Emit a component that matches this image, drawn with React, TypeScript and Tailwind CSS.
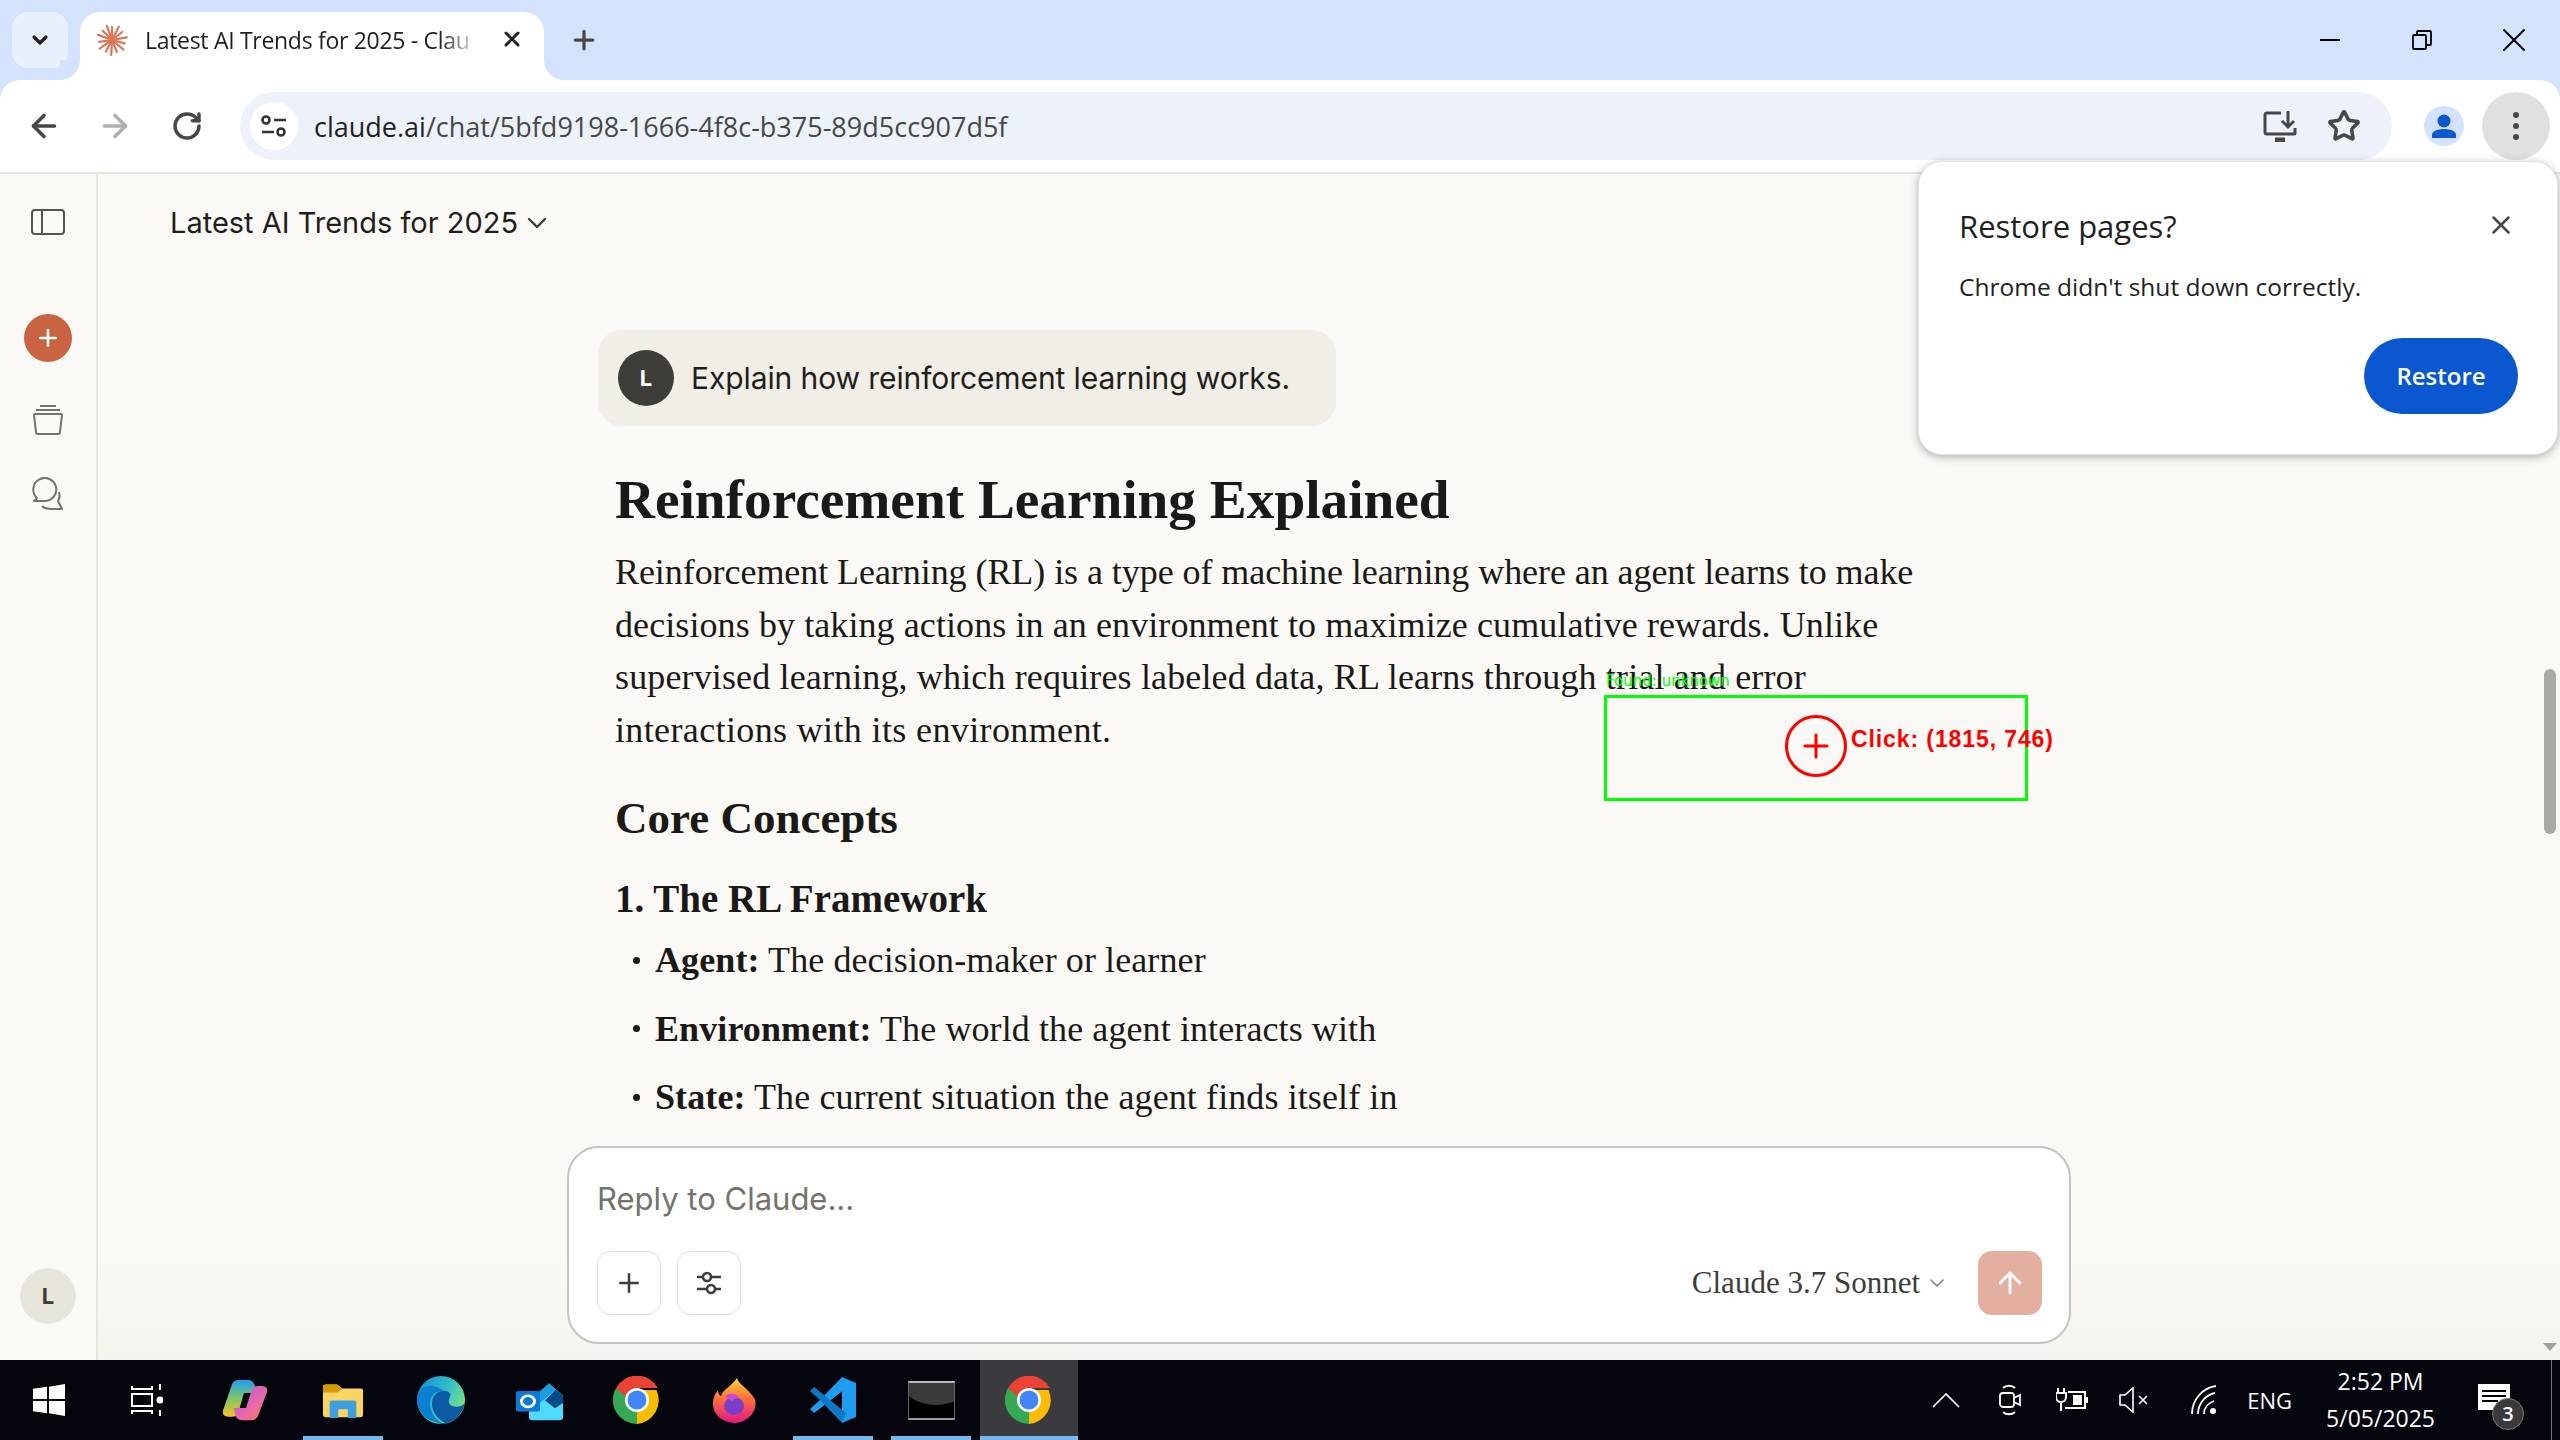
import React from 'react';
import { ChevronDown, X, Plus, ArrowLeft, ArrowRight, RotateCw, Star, ArrowUp } from 'lucide-react';

const sans = "font-['Open_Sans','Noto_Sans',sans-serif]";

function ClaudeStar({ size = 32 }: { size?: number }) {
  const rays = [0, 27, 52, 80, 105, 130, 158, 183, 208, 235, 262, 290, 315, 340];
  return (
    <svg width={size} height={size} viewBox="0 0 32 32">
      {rays.map((a, i) => (
        <line key={a} x1="16" y1="16" x2="16" y2={i % 2 ? 1 : 3} stroke="#d97757" strokeWidth="2.2" strokeLinecap="round" transform={`rotate(${a} 16 16)`} />
      ))}
    </svg>
  );
}

function ChromeLogo() {
  return (
    <svg width="48" height="48" viewBox="0 0 48 48">
      <path d="M24 24 L24 14 L43.5 14 A24 24 0 0 1 24 48 Z" fill="#fbbc04" />
      <path d="M24 48 A24 24 0 0 1 3 12 L24 24 Z" fill="#34a853" />
      <path d="M3 12 A24 24 0 0 1 45 12 L24 12 L12 20 Z" fill="#ea4335" />
      <circle cx="24" cy="24" r="12" fill="#fff" />
      <circle cx="24" cy="24" r="9.5" fill="#4285f4" />
    </svg>
  );
}

function CopilotLogo() {
  return (
    <svg width="46" height="42" viewBox="0 0 46 48" preserveAspectRatio="none">
      <defs>
        <linearGradient id="cpA" x1="0" y1="0" x2="0" y2="1">
          <stop offset="0" stopColor="#1f9cf0" />
          <stop offset="0.5" stopColor="#7fc66a" />
          <stop offset="1" stopColor="#f4c21f" />
        </linearGradient>
        <linearGradient id="cpB" x1="0" y1="0" x2="1" y2="1">
          <stop offset="0" stopColor="#a85ee0" />
          <stop offset="0.6" stopColor="#e96aa8" />
          <stop offset="1" stopColor="#f6803a" />
        </linearGradient>
      </defs>
      <path d="M16 1h10c4 0 6 3 7 7l2 8H22l-6 24c-1 2-3 3-6 3H6c-4 0-6-3-5-7L10 6c1-3 3-5 6-5z" fill="url(#cpA)" />
      <path d="M30 47H20c-4 0-6-3-7-7l-1-7h12l6-22c1-2 3-3 6-3h4c4 0 6 3 5 7l-9 27c-1 3-3 5-6 5z" fill="url(#cpB)" />
    </svg>
  );
}

function ExplorerLogo() {
  return (
    <svg width="42" height="35" viewBox="0 0 44 44" preserveAspectRatio="none">
      <path d="M1 5a3 3 0 0 1 3-3h12l5 5h20a2 2 0 0 1 2 2v31a3 3 0 0 1-3 3H4a3 3 0 0 1-3-3z" fill="#fcd462" />
      <path d="M1 5a3 3 0 0 1 3-3h12l5 6-5 4H1z" fill="#d39a08" />
      <path d="M8 44V24a2 2 0 0 1 2-2h24a2 2 0 0 1 2 2v20h-9V33H17v11z" fill="#3f9ee0" />
    </svg>
  );
}

function EdgeLogo() {
  return (
    <svg width="48" height="48" viewBox="0 0 48 48">
      <defs>
        <linearGradient id="edA" x1="0" y1="0" x2="1" y2="0.6">
          <stop offset="0" stopColor="#0f8ad6" />
          <stop offset="0.6" stopColor="#35c1c8" />
          <stop offset="1" stopColor="#7de27b" />
        </linearGradient>
      </defs>
      <circle cx="24" cy="24" r="24" fill="url(#edA)" />
      <path d="M48 27c-2 3-8 5-13 3-4-2-4-6-2-9 2-4-3-7-8-6-6 1-10 6-10 13 0 9 7 17 16 20-4 1-8 0-12-2C8 42 1 34 0 24c2 16 16 24 30 23 8-1 15-9 18-20z" fill="#0c59a4" />
      <path d="M0 24C0 12 9 9 16 10c6 1 10 4 9 5-7 0-12 5-12 13 0 8 5 15 12 19C10 46 0 36 0 24z" fill="#0d7fd0" />
    </svg>
  );
}

function OutlookLogo() {
  return (
    <svg width="48" height="41" viewBox="0 0 48 48" preserveAspectRatio="none">
      <path d="M14 26 L34 4 L48 18 V44 a3 3 0 0 1-3 3 H17 a3 3 0 0 1-3-3z" fill="#50d9ff" />
      <path d="M18 20 L34 4 L41 11 L25 27z" fill="#1b9de2" />
      <path d="M30 24 L41 11 L48 18 V27 L40 33z" fill="#064a8c" />
      <rect x="1" y="13" width="24" height="24" rx="2" fill="#0f78d4" />
      <circle cx="13" cy="25" r="6.5" fill="none" stroke="#fff" strokeWidth="3" />
    </svg>
  );
}

function FirefoxLogo() {
  return (
    <svg width="44" height="45" viewBox="0 0 44 50" preserveAspectRatio="none">
      <defs>
        <linearGradient id="ffA" x1="0.5" y1="0" x2="0.5" y2="1">
          <stop offset="0" stopColor="#ffd43a" />
          <stop offset="0.45" stopColor="#ff7139" />
          <stop offset="1" stopColor="#e31587" />
        </linearGradient>
      </defs>
      <path d="M24 0c2 8 14 14 18 24 3 12-7 26-20 26C9 50 0 40 0 29c0-6 2-12 5-15 0 3 1 5 3 6 2-8 10-10 16-20z" fill="url(#ffA)" />
      <circle cx="21" cy="31" r="10" fill="#7a3ec8" />
      <path d="M12 20c5-4 12-3 14 2-4 1-6 2-7 4z" fill="#c24bd8" />
    </svg>
  );
}

function VSCodeLogo() {
  return (
    <svg width="48" height="48" viewBox="0 0 48 48">
      <path d="M33 1 L47 7 V41 L33 47 Z" fill="#1f9cf0" />
      <path d="M33 1 L36 13 L13 31 L5 37 L1 33 L11 24 L33 1z" fill="#1f9cf0" />
      <path d="M1 15 L5 11 L37 37 L33 47 L11 24z" fill="#0f78c4" />
    </svg>
  );
}

function TerminalLogo() {
  return (
    <div className="w-[47px] h-[39px] bg-black border-y-2 border-x border-x-[#666] border-t-[#bbb] border-b-[#999] relative overflow-hidden">
      <div className="absolute left-[-8px] top-[-28px] w-[70px] h-[50px] rounded-[50%] bg-[#3a3a3a]" />
    </div>
  );
}

function TaskSlot({ children, on = false, active = false }: { children?: React.ReactNode; on?: boolean; active?: boolean }) {
  return (
    <div className={`w-[98px] h-full flex items-center justify-center relative ${active ? 'bg-[#3a3a3f]' : ''}`}>
      {children}
      {on && <div className={`absolute bottom-0 h-1 bg-[#76b9ed] ${active ? 'left-0 right-0' : 'left-[9px] right-[9px]'}`} />}
    </div>
  );
}

function TabStrip() {
  return (
    <div className="h-20 bg-[#d3e3fd] flex items-start pt-3 pl-3 shrink-0">
      <div className="w-14 h-14 rounded-2xl bg-[#e8f0fe] flex items-center justify-center text-[#1f1f1f]">
        <ChevronDown size={24} strokeWidth={3.2} />
      </div>
      <div className="ml-3 w-[464px] h-[68px] bg-white rounded-t-[20px] flex items-start pt-3 pl-[16px] relative">
        {/* concave flares where the tab meets the toolbar */}
        <div className="absolute left-[-20px] bottom-0 w-5 h-5 bg-white">
          <div className="w-5 h-5 bg-[#d3e3fd] rounded-br-[20px]" />
        </div>
        <div className="absolute right-[-20px] bottom-0 w-5 h-5 bg-white">
          <div className="w-5 h-5 bg-[#d3e3fd] rounded-bl-[20px]" />
        </div>
        <ClaudeStar />
        <span className={`${sans} ml-[17px] w-[335px] text-[23px] tracking-[-0.3px] leading-[32px] text-[#1f1f1f] whitespace-nowrap [mask-image:linear-gradient(to_right,black_88%,transparent)]`}>
          Latest AI Trends for 2025 - Clau
        </span>
        <X size={24} strokeWidth={3} className="ml-[20px] mt-[3px] text-[#1f1f1f]" />
      </div>
      <Plus size={30} strokeWidth={2.6} className="ml-[25px] mt-[13px] text-[#474747]" />
      <div className="ml-auto flex items-center h-14 text-black">
        <div className="w-[92px] flex justify-center">
          <div className="w-5 h-[2px] bg-black" />
        </div>
        <div className="w-[92px] flex justify-center">
          <svg width="20" height="20" viewBox="0 0 20 20" fill="none" stroke="#000" strokeWidth="1.8">
            <rect x="1" y="5" width="13" height="14" rx="1" />
            <path d="M5 5V2a1 1 0 0 1 1-1h12a1 1 0 0 1 1 1v12a1 1 0 0 1-1 1h-4" />
          </svg>
        </div>
        <div className="w-[92px] flex justify-center">
          <X size={40} strokeWidth={1.2} />
        </div>
      </div>
    </div>
  );
}

function Toolbar() {
  return (
    <div className="h-[94px] bg-white flex items-start pt-3 pl-[26px] rounded-t-[20px] border-b-2 border-b-[#e3e3e0]">
      <div className="h-[68px] flex items-center gap-[35px]">
        <ArrowLeft size={36} strokeWidth={2.4} className="text-[#474747]" />
        <ArrowRight size={36} strokeWidth={2.4} className="text-[#b0b0b0]" />
        <RotateCw size={32} strokeWidth={2.6} className="text-[#474747] ml-[3px]" />
      </div>
      <div className="ml-[37px] w-[2152px] shrink-0 h-[68px] rounded-full bg-[#ecf1fa] flex items-center pl-[10px]">
        <div className="w-12 h-12 rounded-full bg-white flex items-center justify-center">
          <svg width="28" height="24" viewBox="0 0 28 24" fill="none" stroke="#333" strokeWidth="2.6">
            <circle cx="6" cy="6" r="3.5" />
            <path d="M14 6h12M2 18h12" />
            <circle cx="21" cy="18" r="3.5" />
          </svg>
        </div>
        <span className={`${sans} ml-4 text-[27px] leading-none whitespace-nowrap text-[#474747]`}>
          <span className="text-[#1f1f1f]">claude.ai</span>/chat/5bfd9198-1666-4f8c-b375-89d5cc907d5f
        </span>
        <div className="ml-auto flex items-center gap-[30px] pr-[31px]">
          <svg width="34" height="32" viewBox="0 0 34 32" fill="none" stroke="#474747" strokeWidth="3">
            <path d="M18 3H4a2 2 0 0 0-2 2v17a2 2 0 0 0 2 2h27a1 1 0 0 0 1-1v-5" />
            <path d="M12 30h10" strokeWidth="5" />
            <path d="M25 1v15M19 11l6 6 6-6" />
          </svg>
          <Star size={34} strokeWidth={2.5} className="text-[#474747]" />
        </div>
      </div>
      <div className="ml-[32px] w-10 h-[68px] flex items-center">
        <div className="w-10 h-10 rounded-full bg-[#d3e3fd] flex items-center justify-center">
          <svg width="26" height="26" viewBox="0 0 26 26" fill="#0b57d0">
            <circle cx="13" cy="8" r="6.5" />
            <path d="M1 25v-3c0-4 6-6 12-6s12 2 12 6v3z" />
          </svg>
        </div>
      </div>
      <div className="ml-[18px] w-[68px] h-[68px] rounded-full bg-[#e0e0e0] flex flex-col items-center justify-center gap-[5px]">
        <div className="w-[6px] h-[6px] rounded-full bg-[#474747]" />
        <div className="w-[6px] h-[6px] rounded-full bg-[#474747]" />
        <div className="w-[6px] h-[6px] rounded-full bg-[#474747]" />
      </div>
    </div>
  );
}

function Sidebar() {
  return (
    <div className="w-[98px] shrink-0 border-r-2 border-r-[#e6e4dd] flex flex-col items-center pb-[36px] bg-[#faf9f5]">
      <svg className="mt-[35px]" width="34" height="26" viewBox="0 0 34 26" fill="none" stroke="#55544f" strokeWidth="2">
        <rect x="1" y="1" width="32" height="24" rx="3" />
        <path d="M11 1v24" />
      </svg>
      <div className="mt-[79px] w-12 h-12 rounded-full bg-[#c96442] flex items-center justify-center">
        <Plus size={26} strokeWidth={2.4} className="text-white" />
      </div>
      <svg className="mt-[43px]" width="32" height="30" viewBox="0 0 32 30" fill="none" stroke="#73726c" strokeWidth="2">
        <path d="M8 1h16M4 5h24" />
        <path d="M2 10a1 1 0 0 1 1-1h26a1 1 0 0 1 1 1l-2 17a2 2 0 0 1-2 2H6a2 2 0 0 1-2-2z" />
      </svg>
      <svg className="mt-[42px]" width="32" height="34" viewBox="0 0 32 34" fill="none" stroke="#73726c" strokeWidth="2">
        <path d="M2 24l3-3a11.500 11.500 0 1 1 7 3z" strokeLinejoin="round" />
        <path d="M27 15c1 3 1 6-1 9l4 8H18c-3 0-6-1-8-3" strokeLinejoin="round" />
      </svg>
      <div className="mt-auto w-14 h-14 rounded-full bg-[#e8e6dc] flex items-center justify-center">
        <span className="font-['Inter',sans-serif] text-[22px] font-bold text-[#3d3d3a]">L</span>
      </div>
    </div>
  );
}

function Bullet({ label, text }: { label: string; text: string }) {
  return (
    <li className="flex h-[68.500px] items-center">
      <span className="w-[40px] pl-[18px] flex">
        <span className="w-[7px] h-[7px] rounded-full bg-[#1a1917]" />
      </span>
      <span>
        <b>{label}:</b> {text}
      </span>
    </li>
  );
}

function Chat() {
  return (
    <div className="flex-1 min-w-0 relative bg-[#faf9f5] overflow-hidden">
      <div className="h-[156px] pl-[72px] pt-[32px] flex items-start">
        <span className="font-['Inter',sans-serif] text-[29px] leading-[34px] text-[#1f1e1d]">Latest AI Trends for 2025</span>
        <ChevronDown size={32} strokeWidth={1.8} className="ml-[3px] mt-[1px] text-[#3d3d3a]" />
      </div>
      <div className="ml-[500px] w-[1500px]">
        <div className="inline-flex items-center h-24 w-[738px] rounded-3xl bg-[#f0eee6] pl-5">
          <div className="w-14 h-14 rounded-full bg-[#3d3d3a] flex items-center justify-center">
            <span className="font-['Inter',sans-serif] text-[22px] font-bold text-white">L</span>
          </div>
          <span className="ml-[17px] font-['Inter',sans-serif] text-[30px] tracking-[-0.1px] text-[#1f1e1d] whitespace-nowrap">Explain how reinforcement learning works.</span>
        </div>
        <div className="pl-[17px] font-['Liberation_Serif',serif] text-[#1a1917]">
          <h1 className="mt-[42px] text-[55.300px] leading-[64px] font-bold">Reinforcement Learning Explained</h1>
          <p className="mt-[14px] text-[36px] leading-[52.700px] whitespace-nowrap">
            <span className="tracking-[-0.06px]">Reinforcement Learning (RL) is a type of machine learning where an agent learns to make</span><br />
            <span className="tracking-[0.09px]">decisions by taking actions in an environment to maximize cumulative rewards. Unlike</span><br />
            <span className="tracking-[0.14px]">supervised learning, which requires labeled data, RL learns through trial and error</span><br />
            <span className="tracking-[0.37px]">interactions with its environment.</span>
          </p>
          <h2 className="mt-[34px] text-[45px] leading-[54px] font-bold">Core Concepts</h2>
          <h3 className="mt-[31px] text-[39px] leading-[46px] font-bold">1. The RL Framework</h3>
          <ul className="mt-[4px] text-[36px] tracking-[0.1px]">
            <Bullet label="Agent" text="The decision-maker or learner" />
            <Bullet label="Environment" text="The world the agent interacts with" />
            <Bullet label="State" text="The current situation the agent finds itself in" />
          </ul>
        </div>
      </div>

      {/* fade under the composer */}
      <div className="absolute left-0 right-0 bottom-0 h-[100px] bg-gradient-to-b from-[#faf9f5] to-[#f5f3ee]" />

      <div className="absolute left-[469px] top-[972px] w-[1504px] h-[198px] bg-white rounded-[32px] border-2 border-[#c4c4c0] pl-[28px] pr-[27px] pt-[31px]">
        <div className="font-['Inter',sans-serif] text-[31px] leading-[40px] text-[#73726c]">Reply to Claude...</div>
        <div className="mt-[32px] flex items-center">
          <div className="w-16 h-16 rounded-[14px] border border-[#e0ded8] flex items-center justify-center">
            <Plus size={30} strokeWidth={2} className="text-[#3d3d3a]" />
          </div>
          <div className="ml-[16px] w-16 h-16 rounded-[14px] border border-[#e0ded8] flex items-center justify-center">
            <svg width="28" height="24" viewBox="0 0 28 24" fill="none" stroke="#3d3d3a" strokeWidth="2.6">
              <path d="M2 6h6M16 6h10M2 18h10M20 18h6" />
              <circle cx="12" cy="6" r="4" />
              <circle cx="16" cy="18" r="4" />
            </svg>
          </div>
          <span className="ml-auto font-['Liberation_Serif',serif] text-[31px] text-[#3d3d3a] whitespace-nowrap">Claude 3.7 Sonnet</span>
          <ChevronDown size={24} strokeWidth={1.4} className="ml-[5px] text-[#73726c]" />
          <div className="ml-[29px] w-16 h-16 rounded-[14px] bg-[#e2afa0] flex items-center justify-center">
            <ArrowUp size={34} strokeWidth={2} className="text-white" />
          </div>
        </div>
      </div>

      {/* scrollbar */}
      <div className="absolute right-[4px] top-[495px] w-3 h-[165px] rounded-full bg-[#aaa9a4]" />
      <div className="absolute right-[3px] bottom-[9px] w-0 h-0 border-x-[7px] border-x-transparent border-t-[8px] border-t-[#a0a0a0]" />

      {/* annotation drawn over the screenshot */}
      <div className="absolute left-[1508px] top-[500px] font-['DejaVu_Sans',sans-serif] text-[15px] leading-none text-[#00ff00] whitespace-nowrap">Found: unknown</div>
      <div className="absolute left-[1506px] top-[521px] w-[424px] h-[106px] border-[3px] border-[#00ff00]" />
      <div className="absolute left-[1687px] top-[541px] w-[62px] h-[62px] rounded-full border-[3px] border-[#ff0000] flex items-center justify-center">
        <Plus size={38} strokeWidth={1.9} className="text-[#ff0000]" />
      </div>
      <div className="absolute left-[1753px] top-[551px] font-['Liberation_Sans',sans-serif] text-[23px] tracking-[0.9px] leading-[28px] font-bold text-[#ff0000] whitespace-nowrap">Click: (1815, 746)</div>
    </div>
  );
}

function RestoreBubble() {
  return (
    <div className={`${sans} absolute left-[1918px] top-[161px] w-[640px] h-[294px] bg-white rounded-[24px] border border-[#e4e4e4] shadow-[0_2px_8px_rgba(0,0,0,0.3)] z-20 pl-[40px] pt-[44px]`}>
      <div className="text-[31px] leading-[40px] font-medium text-[#1f1f1f]">Restore pages?</div>
      <div className="mt-[24px] text-[24.500px] leading-[34px] text-[#1f1f1f]">Chrome didn't shut down correctly.</div>
      <X size={30} strokeWidth={2} className="absolute right-[41px] top-[48px] text-[#474747]" />
      <div className="absolute right-[39px] top-[176px] w-[154px] h-[76px] rounded-full bg-[#0b57d0] flex items-center justify-center text-[24px] font-semibold text-white">Restore</div>
    </div>
  );
}

function Taskbar() {
  return (
    <div className="h-20 shrink-0 bg-[#05050d] flex items-stretch text-white relative">
      <div className="flex">
        <TaskSlot>
          <svg width="32" height="32" viewBox="0 0 32 34" fill="#fff" preserveAspectRatio="none">
            <path d="M0 5l14-2v13H0zM16 3l16-3v16H16zM0 18h14v13L0 29zM16 18h16v16l-16-3z" />
          </svg>
        </TaskSlot>
        <TaskSlot>
          <svg width="32" height="32" viewBox="0 0 32 32" fill="none" stroke="#fff" strokeWidth="2">
            <path d="M1 2v3h20V2M1 10h20v12H1zM1 30v-3h20v3" />
            <path d="M29 0v6M29 26v6" />
            <circle cx="29" cy="16" r="2.500" fill="#fff" />
          </svg>
        </TaskSlot>
        <TaskSlot><CopilotLogo /></TaskSlot>
        <TaskSlot on><ExplorerLogo /></TaskSlot>
        <TaskSlot><EdgeLogo /></TaskSlot>
        <TaskSlot><OutlookLogo /></TaskSlot>
        <TaskSlot><ChromeLogo /></TaskSlot>
        <TaskSlot><FirefoxLogo /></TaskSlot>
        <TaskSlot on><VSCodeLogo /></TaskSlot>
        <TaskSlot on><TerminalLogo /></TaskSlot>
        <TaskSlot on active><ChromeLogo /></TaskSlot>
      </div>
      <div className="ml-auto flex items-center pr-[50px]">
        <svg width="28" height="16" viewBox="0 0 28 16" fill="none" stroke="#fff" strokeWidth="1.6"><path d="M1 15L14 2l13 13" /></svg>
        <svg className="ml-[38px]" width="24" height="32" viewBox="0 0 24 32" fill="none" stroke="#fff" strokeWidth="1.8">
          <path d="M5 4c3-3 9-3 12 0M5 28c3 3 9 3 12 0" />
          <rect x="2" y="9" width="14" height="14" rx="3" />
          <path d="M16 14l6-3v10l-6-3" />
        </svg>
        <svg className="ml-[34px]" width="32" height="26" viewBox="0 0 32 26" fill="none" stroke="#fff" strokeWidth="2">
          <path d="M2 1v5M8 1v5M0 6h10v4a5 5 0 0 1-10 0zM5 15v9" />
          <path d="M12 5h17v16H9" />
          <rect x="17" y="8" width="9" height="10" fill="#fff" stroke="none" />
          <path d="M31 10v6" />
        </svg>
        <svg className="ml-[31px]" width="30" height="26" viewBox="0 0 30 26" fill="none" stroke="#fff" strokeWidth="1.6">
          <path d="M1 8h5l8-7v24l-8-7H1z" />
          <path d="M20 9l8 8M28 9l-8 8" />
        </svg>
        <svg className="ml-[41px]" width="28" height="30" viewBox="0 0 28 30" fill="none" stroke="#fff" strokeWidth="1.8">
          <path d="M2 29C2 15 12 3 26 1M8 29C8 19 15 10 25 8M14 29c0-6 4-11 10-13" />
          <circle cx="23" cy="26" r="3" fill="#fff" stroke="none" />
        </svg>
        <span className={`${sans} ml-[29px] text-[22px] leading-none`}>ENG</span>
        <div className={`${sans} ml-[34px] flex flex-col items-center text-[23px] leading-[37px]`}>
          <span>2:52 PM</span>
          <span>5/05/2025</span>
        </div>
        <div className="ml-[43px] relative w-[32px] h-[26px] bg-white mt-[-6px]">
          <div className="mx-[4px] mt-[6px] h-[2px] bg-black" />
          <div className="mx-[4px] mt-[3px] h-[2px] bg-black" />
          <div className="mx-[4px] mt-[3px] h-[2px] w-[16px] bg-black" />
          <div className={`${sans} absolute left-[14px] top-[14px] w-[32px] h-[32px] rounded-full bg-[#3a3a3a] border border-[#777] flex items-center justify-center text-[20px] font-semibold`}>3</div>
        </div>
      </div>
      <div className="absolute right-[8px] top-0 bottom-0 w-px bg-[#777]" />
    </div>
  );
}

export default function App() {
  return (
    <div className="w-[2560px] h-[1440px] flex flex-col relative overflow-hidden bg-[#faf9f5]">
      <TabStrip />
      <div className="bg-[#d3e3fd] shrink-0">
        <Toolbar />
      </div>
      <div className="flex-1 flex min-h-0">
        <Sidebar />
        <Chat />
      </div>
      <Taskbar />
      <RestoreBubble />
    </div>
  );
}
